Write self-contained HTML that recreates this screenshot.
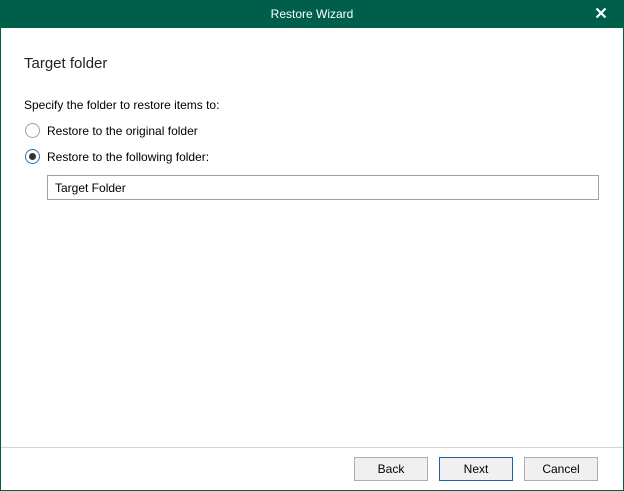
<!DOCTYPE html>
<html><head><style>
body{margin:0;width:624px;height:491px;font-family:"Liberation Sans",sans-serif;font-size:12px;color:#000;position:relative;overflow:hidden;background:#fff}
.win{position:absolute;left:0;top:0;width:622px;height:489px;border:1px solid #005f4b;}
.title{position:absolute;left:0;top:0;width:624px;height:28px;background:#005f4b;color:#fff;text-align:center;line-height:28px;font-size:12px}
.x{position:absolute;right:17px;top:7px;width:12px;height:12px}
.abs{position:absolute;white-space:nowrap}
.radio{position:absolute;width:13px;height:13px;border:1px solid #a0a0a0;border-radius:50%;background:#fff}
.btn{position:absolute;top:457px;width:72px;height:22px;border:1px solid #adadad;background:#f0f0f0;text-align:center;line-height:22px}
</style></head><body>
<div class="win"></div>
<div class="title">Restore Wizard
<svg class="x" viewBox="0 0 12 12"><path d="M1.5 1.5L10.5 10.5M10.5 1.5L1.5 10.5" stroke="#fff" stroke-width="2.2"/></svg></div>
<div class="abs" style="left:24px;top:55px;font-size:15px;color:#222">Target folder</div>
<div class="abs" style="left:24px;top:98px">Specify the folder to restore items to:</div>
<div class="radio" style="left:25px;top:123px"></div>
<div class="abs" style="left:47px;top:124px">Restore to the original folder</div>
<div class="radio" style="left:25px;top:149px;border-color:#2f6fb5"><div style="position:absolute;left:3px;top:3px;width:7px;height:7px;border-radius:50%;background:#333"></div></div>
<div class="abs" style="left:47px;top:150px">Restore to the following folder:</div>
<div class="abs" style="left:47px;top:175px;width:550px;height:23px;border:1px solid #a0a0a0"><span style="position:absolute;left:7px;top:5px">Target Folder</span></div>
<div class="abs" style="left:1px;top:447px;width:622px;height:1px;background:#d4d4d4"></div>
<div class="btn" style="left:354px">Back</div>
<div class="btn" style="left:439px;border-color:#1e62a8">Next</div>
<div class="btn" style="left:524px">Cancel</div>
</body></html>
